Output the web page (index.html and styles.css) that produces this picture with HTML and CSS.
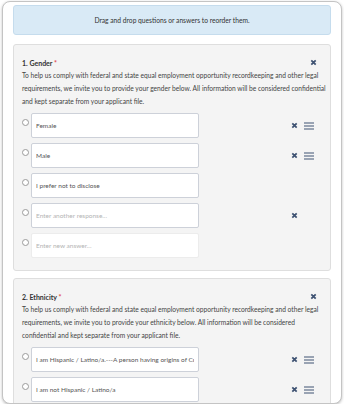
FILE: index.html
```
<!DOCTYPE html>
<html lang="en">
<head>
  <meta charset="UTF-8">
  <title>Reorder questions</title>
  <link rel="stylesheet" href="styles.css">
</head>
<body>
  <div class="window">
    <div class="notice">Drag and drop questions or answers to reorder them.</div>

    <section class="question">
      <div class="q-head">
        <span class="q-title">1. Gender <span class="req">*</span></span>
        <span class="icon-x"><svg viewBox="0 0 8 8"><path d="M1.5 1.5 6.5 6.5M6.5 1.5 1.5 6.5"/></svg></span>
      </div>
      <p class="q-desc">To help us comply with federal and state equal employment opportunity recordkeeping and other legal requirements, we invite you to provide your gender below. All information will be considered confidential and kept separate from your applicant file.</p>
      <div class="answers">
        <div class="answer">
          <span class="radio"></span>
          <input class="answer-input" type="text" value="Female">
          <div class="actions">
            <span class="icon-x"><svg viewBox="0 0 8 8"><path d="M1.5 1.5 6.5 6.5M6.5 1.5 1.5 6.5"/></svg></span>
            <span class="icon-bars"><svg viewBox="0 0 10 8"><path d="M0 1h10M0 4h10M0 7h10"/></svg></span>
          </div>
        </div>
        <div class="answer">
          <span class="radio"></span>
          <input class="answer-input" type="text" value="Male">
          <div class="actions">
            <span class="icon-x"><svg viewBox="0 0 8 8"><path d="M1.5 1.5 6.5 6.5M6.5 1.5 1.5 6.5"/></svg></span>
            <span class="icon-bars"><svg viewBox="0 0 10 8"><path d="M0 1h10M0 4h10M0 7h10"/></svg></span>
          </div>
        </div>
        <div class="answer">
          <span class="radio"></span>
          <input class="answer-input" type="text" value="I prefer not to disclose">
        </div>
        <div class="answer">
          <span class="radio"></span>
          <input class="answer-input" type="text" placeholder="Enter another response...">
          <div class="actions">
            <span class="icon-x"><svg viewBox="0 0 8 8"><path d="M1.5 1.5 6.5 6.5M6.5 1.5 1.5 6.5"/></svg></span>
            <span class="icon-bars hidden"></span>
          </div>
        </div>
        <div class="answer">
          <span class="radio"></span>
          <input class="answer-input new" type="text" placeholder="Enter new answer...">
        </div>
      </div>
    </section>

    <section class="question">
      <div class="q-head">
        <span class="q-title">2. Ethnicity <span class="req">*</span></span>
        <span class="icon-x"><svg viewBox="0 0 8 8"><path d="M1.5 1.5 6.5 6.5M6.5 1.5 1.5 6.5"/></svg></span>
      </div>
      <p class="q-desc">To help us comply with federal and state equal employment opportunity recordkeeping and other legal requirements, we invite you to provide your ethnicity below. All information will be considered confidential and kept separate from your applicant file.</p>
      <div class="answers">
        <div class="answer">
          <span class="radio"></span>
          <input class="answer-input" type="text" value="I am Hispanic / Latino/a.---A person having origins of Cuban, Mexican, Puerto Rican">
          <div class="actions">
            <span class="icon-x"><svg viewBox="0 0 8 8"><path d="M1.5 1.5 6.5 6.5M6.5 1.5 1.5 6.5"/></svg></span>
            <span class="icon-bars"><svg viewBox="0 0 10 8"><path d="M0 1h10M0 4h10M0 7h10"/></svg></span>
          </div>
        </div>
        <div class="answer">
          <span class="radio"></span>
          <input class="answer-input" type="text" value="I am not Hispanic / Latino/a">
          <div class="actions">
            <span class="icon-x"><svg viewBox="0 0 8 8"><path d="M1.5 1.5 6.5 6.5M6.5 1.5 1.5 6.5"/></svg></span>
            <span class="icon-bars"><svg viewBox="0 0 10 8"><path d="M0 1h10M0 4h10M0 7h10"/></svg></span>
          </div>
        </div>
      </div>
    </section>
  </div>
</body>
</html>
```

FILE: styles.css
```
*, *::before, *::after {
  box-sizing: border-box;
}
body {
  margin: 0;
  padding: 0;
  font-family: 'Lato', 'Open Sans', sans-serif;
  background: white;
  color: #333;
}

/* 枠 */
.window {
  margin: 1px 2px 0 2px;
  height: 403px;
  border: 1px solid #c4c4c4;
  border-radius: 8px;
  box-shadow: 0 1px 3px rgba(0,0,0,0.25);
  padding: 3px 10px 0 10px;
  overflow: hidden;
  background: white;
}

/* お知らせ */
.notice {
  height: 30px;
  line-height: 28px;
  text-align: center;
  font-size: 6.7px;
  color: #333;
  background: #d9eaf6;
  border: 1px solid #c5dced;
  border-radius: 3px;
  margin-bottom: 9px;
}

/* 質問カード */
.question {
  background: #f4f4f4;
  border: 1px solid #dedede;
  border-radius: 3px;
  padding: 11px 4px 12px 8px;
  margin-bottom: 7px;
}
.q-head {
  display: flex;
  justify-content: space-between;
  align-items: center;
  height: 13px;
  padding-right: 9px;
}
.q-title {
  font-size: 7px;
  font-weight: bold;
  color: #333;
}
.req {
  color: #e0474c;
}
.q-desc {
  margin: 0;
  font-size: 6.65px;
  line-height: 13px;
  color: #444;
}

/* 回答 */
.answers {
  display: flex;
  flex-direction: column;
  gap: 5px;
  margin-top: 5px;
}
.answer {
  display: flex;
  align-items: center;
  height: 25px;
}
.radio {
  width: 7px;
  height: 7px;
  border: 1px solid #9a9a9a;
  border-radius: 50%;
  background: white;
  margin-right: 2px;
  align-self: flex-start;
  margin-top: 6px;
}
.answer-input {
  width: 168px;
  height: 25px;
  border: 1px solid #cdd1d9;
  border-radius: 2px;
  background: white;
  padding: 0 4px;
  font-family: inherit;
  font-size: 6.5px;
  color: #555;
  outline: none;
}
.answer-input::placeholder {
  color: #b4b4b4;
}
.answer-input.new {
  border-color: #ececec;
}
.actions {
  margin-left: auto;
  margin-right: 12px;
  display: flex;
  align-items: center;
  gap: 6px;
}

/* アイコン */
.icon-x svg {
  display: block;
  width: 7px;
  height: 7px;
  stroke: #3e5272;
  stroke-width: 2;
  fill: none;
}
.icon-bars {
  display: block;
  width: 10px;
  height: 8px;
}
.icon-bars svg {
  display: block;
  width: 10px;
  height: 8px;
  stroke: #3e5272;
  stroke-width: 1.2;
  fill: none;
}
.hidden {
  visibility: hidden;
}
```
